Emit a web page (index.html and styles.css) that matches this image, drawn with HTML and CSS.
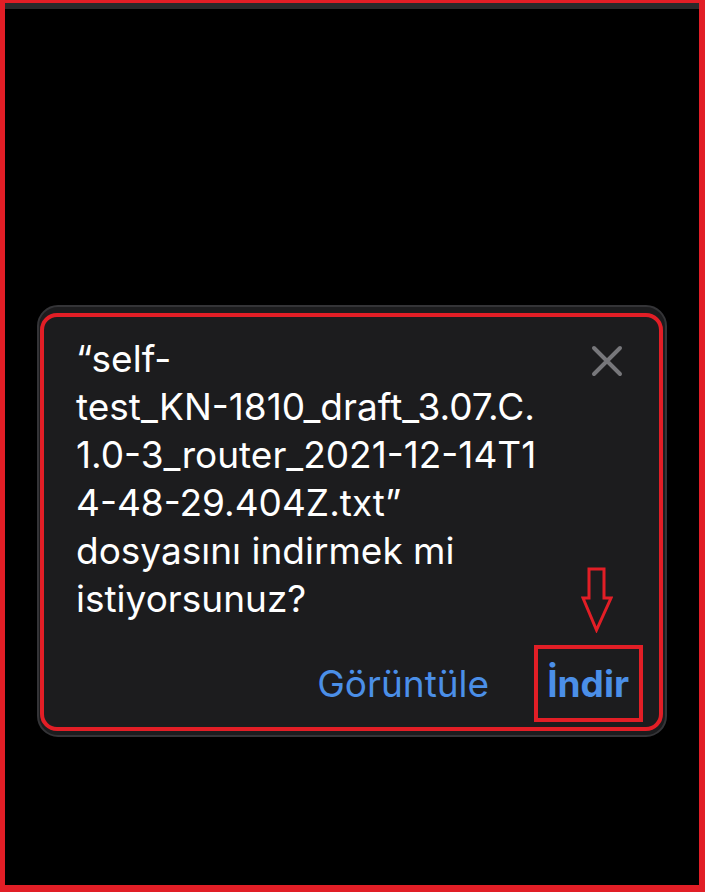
FILE: index.html
```html
<!DOCTYPE html>
<html lang="tr">
<head>
<meta charset="utf-8">
<title>Dosya indirme</title>
<link rel="stylesheet" href="styles.css">
</head>
<body>
<div class="frame">
  <div class="top-strip"></div>
  <div class="stage">
    <div class="alert">
      <div class="highlight">
        <div class="alert-body">
          <p class="message">“self-<br>test_KN-1810_draft_3.07.C.<br>1.0-3_router_2021-12-14T1<br>4-48-29.404Z.txt”<br>dosyasını indirmek mi<br>istiyorsunuz?</p>
          <button class="close" aria-label="Kapat">
            <svg viewBox="0 0 32 32" width="32" height="32"><path d="M3 3 L29 29 M29 3 L3 29" stroke="#77777b" stroke-width="4" stroke-linecap="round" fill="none"/></svg>
          </button>
        </div>
        <div class="actions">
          <button class="btn">Görüntüle</button>
          <div class="btn-box"><button class="btn btn-strong">İndir</button></div>
        </div>
        <svg class="arrow" viewBox="0 0 32 66" width="32" height="66"><polygon points="8,2 23,2 23,31 30,31 15.5,63 2,31 8,31" fill="none" stroke="#e21e26" stroke-width="3"/></svg>
      </div>
    </div>
  </div>
</div>
</body>
</html>
```
FILE: styles.css
```css
* { box-sizing: border-box; }
html, body { margin: 0; padding: 0; background: #000; }
body { font-family: Inter, "Liberation Sans", sans-serif; }
.frame {
  width: 705px;
  height: 892px;
  border-style: solid;
  border-color: #e21e26;
  border-width: 3px 6px 7px 5px;
  display: flex;
  flex-direction: column;
}
.top-strip { height: 6px; background: #2a2a2b; }
.stage { padding: 296px 0 0 32px; }
.alert {
  width: 630px;
  background: #1c1c1e;
  border: 2px solid #343437;
  border-radius: 21px;
  padding: 6px 2px 4px 1px;
}
.highlight {
  position: relative;
  border: 4px solid #e21e26;
  border-radius: 17px;
}
.alert-body {
  display: flex;
  align-items: flex-start;
  padding: 18px 36px 0 32px;
}
.message {
  flex: 1;
  margin: 0;
  color: #fff;
  font-size: 37px;
  line-height: 48px;
}
.close {
  background: none;
  border: 0;
  padding: 0;
  margin-top: 10px;
  width: 32px;
  height: 32px;
  display: block;
}
.close svg { display: block; }
.actions {
  display: flex;
  justify-content: flex-end;
  align-items: center;
  gap: 45px;
  margin-top: 22px;
  padding: 0 16px 5px 0;
}
.btn {
  background: none;
  border: 0;
  padding: 0;
  font-family: Inter, "Liberation Sans", sans-serif;
  font-size: 37px;
  color: #4b8fe8;
}
.btn-strong { font-weight: 700; }
.btn-box {
  height: 77px;
  border: 4px solid #e21e26;
  padding: 0 10px 0 9px;
  display: flex;
  align-items: center;
}
.arrow {
  position: absolute;
  left: 537px;
  top: 250px;
}
```
